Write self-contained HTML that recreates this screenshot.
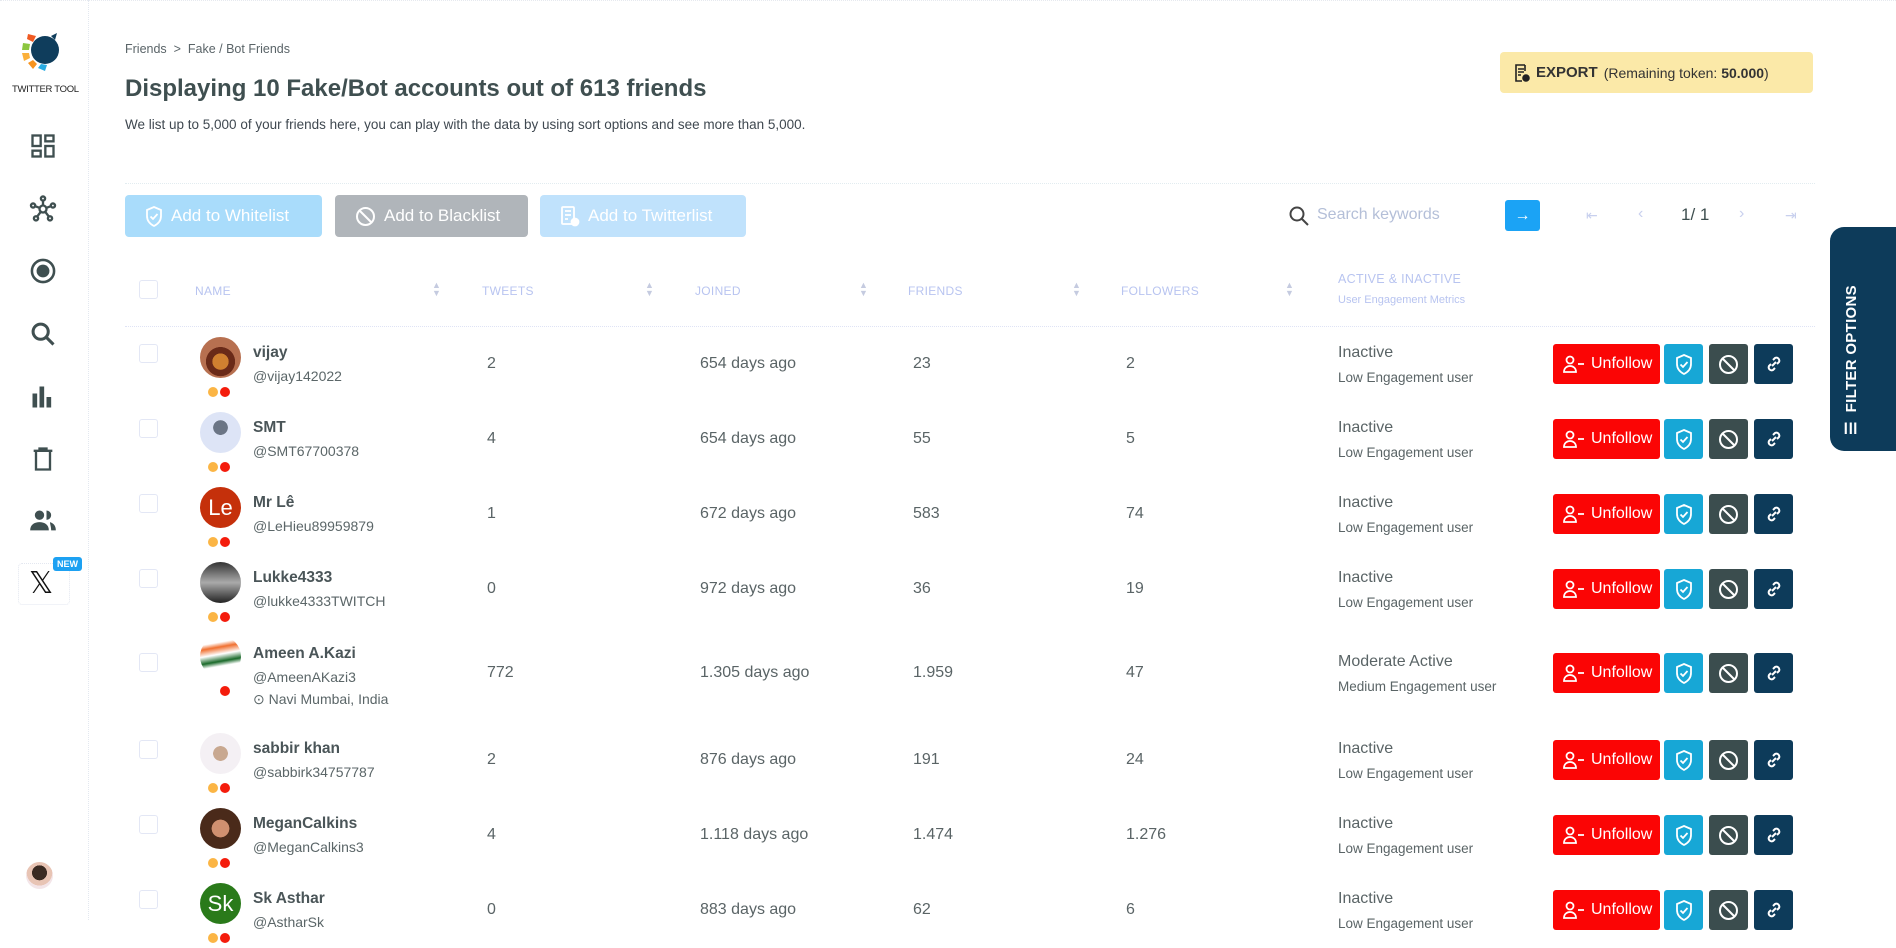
<!DOCTYPE html>
<html><head><meta charset="utf-8"><style>
*{box-sizing:border-box;margin:0;padding:0}
body{width:1896px;height:920px;overflow:hidden;background:#fff;font-family:"Liberation Sans",sans-serif;color:#4a5558;position:relative}
.a{position:absolute}
.side{left:0;top:0;width:89px;height:920px;border-right:1px dotted #e3e8f0}
.ic{position:absolute;left:29px;width:28px;height:28px}
.btn{position:absolute;top:195px;height:42px;border-radius:4px;color:#fff;font-size:17px;display:flex;align-items:center;padding-left:20px;gap:8px}
.hd{position:absolute;top:284px;font-size:12px;color:#b8c4f0;letter-spacing:.3px}
.srt{position:absolute;top:281px;font-size:9px;line-height:8px;color:#c5cbe0}
.cb{position:absolute;left:139px;width:19px;height:19px;border:1px solid #e3e7f5;border-radius:3px}
.av{position:absolute;left:200px;width:41px;height:41px;border-radius:50%}
.dots{position:absolute;left:208px;width:26px;height:10px}
.dots i{display:inline-block;width:10px;height:10px;border-radius:50%;margin-right:2px}
.nm{position:absolute;left:253px;font-size:15.5px;font-weight:bold;color:#4a5558}
.hn{position:absolute;left:253px;font-size:14px;color:#5b6668}
.c{position:absolute;font-size:16px;color:#5a6466}
.st{position:absolute;left:1338px;font-size:16px;color:#5a6466}
.sb{position:absolute;left:1338px;font-size:13.5px;color:#5a6466}
.ub{position:absolute;left:1553px;width:107px;height:40px;background:#fb0505;border-radius:3px;color:#fff;font-size:16px;display:flex;align-items:center;padding-left:10px;gap:6px}
.sq{position:absolute;width:39px;height:40px;border-radius:3px;display:flex;align-items:center;justify-content:center}
</style></head><body>
<div class="a" style="left:0;top:0;width:1896px;height:2px;border-top:1px dotted #e6e9ef"></div>
<div class="a side"></div>
<svg class="a" style="left:18px;top:26px" width="48" height="48" viewBox="0 0 48 48">
<circle cx="27" cy="24" r="14" fill="#0f3d5c"/><path d="M33 10 l6 -3 l-2 7z" fill="#0f3d5c"/>
<path d="M10 8 l8 2 l-3 6 l-6 -3z" fill="#f05a22"/><path d="M5 17 l7 1 l-1 6 l-7 0z" fill="#8cc63f"/>
<path d="M4 27 l7 0 l1 5 l-6 3z" fill="#fbb03b"/><path d="M10 37 l5 -3 l4 4 l-4 5z" fill="#f7931e"/><path d="M20 42 l3 -4 l6 1 l-2 6z" fill="#29abe2"/></svg>
<div class="a" style="left:12px;top:84px;font-size:9.5px;color:#222;letter-spacing:-.3px">TWITTER TOOL</div>
<svg class="ic" style="top:132px" viewBox="0 0 24 24" fill="none" stroke="#3f4f50" stroke-width="2"><rect x="3" y="3" width="7" height="9"/><rect x="14" y="3" width="7" height="5"/><rect x="14" y="12" width="7" height="9"/><rect x="3" y="16" width="7" height="5"/></svg>
<svg class="ic" style="top:195px" viewBox="0 0 24 24" fill="none" stroke="#3f4f50" stroke-width="2"><circle cx="12" cy="12" r="3"/><circle cx="12" cy="3" r="1.8"/><circle cx="3.5" cy="9" r="1.8"/><circle cx="20.5" cy="9" r="1.8"/><circle cx="6" cy="20" r="1.8"/><circle cx="18" cy="20" r="1.8"/><path d="M12 5v4M5 9.5l4 1.5M19 9.5l-4 1.5M7 18.5l3-4M17 18.5l-3-4"/></svg>
<svg class="ic" style="top:257px" viewBox="0 0 24 24"><circle cx="12" cy="12" r="9.5" fill="none" stroke="#3f4f50" stroke-width="2.2"/><circle cx="12" cy="12" r="5.5" fill="#3f4f50"/></svg>
<svg class="ic" style="top:320px" viewBox="0 0 24 24" fill="none" stroke="#3f4f50" stroke-width="2.6"><circle cx="10" cy="10" r="6.5"/><path d="M15 15l6 6"/></svg>
<svg class="ic" style="top:383px" viewBox="0 0 24 24" fill="#3f4f50"><rect x="3" y="9" width="4" height="12"/><rect x="9" y="3" width="4" height="18"/><rect x="15" y="12" width="4" height="9"/></svg>
<svg class="ic" style="top:445px" viewBox="0 0 24 24" fill="none" stroke="#3f4f50" stroke-width="2"><path d="M4 5h16M9 5V3h6v2M6 6v15h12V6"/></svg>
<svg class="ic" style="top:507px" viewBox="0 0 24 24" fill="#3f4f50"><circle cx="9" cy="7" r="4"/><path d="M1 20c0-5 4-7 8-7s8 2 8 7z"/><path d="M15 3a4 4 0 010 8zM18 13c3 1 5 3 5 7h-4c0-3-1-5-1-7z"/></svg>
<div class="a" style="left:18px;top:563px;width:52px;height:42px;border:1px dotted #e3e7f0;border-radius:4px"></div>
<div class="a" style="left:29px;top:566px;font-size:30px;color:#111;font-family:'DejaVu Sans',sans-serif">𝕏</div>
<div class="a" style="left:53px;top:557px;width:29px;height:14px;background:#1da1f2;color:#fff;font-size:9px;font-weight:bold;border-radius:3px;text-align:center;line-height:14px">NEW</div>
<div class="a" style="left:26px;top:862px;width:27px;height:27px;border-radius:50%;background:radial-gradient(circle at 50% 40%,#3a2a22 0 35%,#e8c4b4 36% 60%,#f3e5e8 61%)"></div>

<div class="a" style="left:125px;top:42px;font-size:12.5px;color:#5a6468">Friends &nbsp;&gt;&nbsp; Fake / Bot Friends</div>
<div class="a" style="left:125px;top:75px;font-size:24px;font-weight:bold;color:#3f4f50">Displaying 10 Fake/Bot accounts out of 613 friends</div>
<div class="a" style="left:125px;top:117px;font-size:13.5px;color:#3f4850">We list up to 5,000 of your friends here, you can play with the data by using sort options and see more than 5,000.</div>
<div class="a" style="left:125px;top:183px;width:1690px;border-top:1px dotted #e2ecf0"></div>

<div class="a" style="left:1500px;top:52px;width:313px;height:41px;background:#fbe9a8;border-radius:4px;font-size:14px;color:#333;display:flex;align-items:center;padding-left:14px;gap:6px">
<svg width="16" height="18" viewBox="0 0 16 18" fill="none" stroke="#222" stroke-width="1.6"><path d="M11 1H2v16h6M4 5h6M4 8h6M4 11h3M11 1v6"/><circle cx="12" cy="14" r="3" fill="#222"/></svg>
<b style="font-size:15px">EXPORT</b><span>(Remaining token: <b>50.000</b>)</span></div>

<div class="btn" style="left:125px;width:197px;background:#a9dcfb">
<svg width="18" height="21" viewBox="0 0 18 21" fill="none" stroke="#fff" stroke-width="1.8"><path d="M9 1l7 3v6c0 5-3 8-7 10C5 18 2 15 2 10V4z"/><path d="M5.5 10.5l2.5 2.5 4.5-5"/></svg>Add to Whitelist</div>
<div class="btn" style="left:335px;width:193px;background:#b0b5ba">
<svg width="21" height="21" viewBox="0 0 21 21" fill="none" stroke="#fff" stroke-width="2"><circle cx="10.5" cy="10.5" r="8.5"/><path d="M4.5 4.5l12 12"/></svg>Add to Blacklist</div>
<div class="btn" style="left:540px;width:206px;background:#c0e2fc">
<svg width="20" height="21" viewBox="0 0 20 21" fill="none" stroke="#fff" stroke-width="1.8"><rect x="2" y="1" width="12" height="17" rx="1"/><path d="M5 5h6M5 9h6M5 13h3"/><circle cx="15" cy="16" r="3.5" fill="#fff"/></svg>Add to Twitterlist</div>

<svg class="a" style="left:1288px;top:205px" width="22" height="22" viewBox="0 0 22 22" fill="none" stroke="#444" stroke-width="2"><circle cx="9" cy="9" r="6.5"/><path d="M14 14l6 6"/></svg>
<div class="a" style="left:1317px;top:206px;font-size:16px;color:#b4bfd8">Search keywords</div>
<div class="a" style="left:1505px;top:200px;width:35px;height:31px;background:#1ba3f5;border-radius:3px;color:#fff;font-size:16px;text-align:center;line-height:31px;font-weight:bold">→</div>
<div class="a" style="left:1586px;top:207px;font-size:14px;color:#c8d0ee">⇤</div>
<div class="a" style="left:1638px;top:205px;font-size:16px;color:#c8d0ee">‹</div>
<div class="a" style="left:1681px;top:205px;font-size:17px;color:#3f4f50">1/ 1</div>
<div class="a" style="left:1739px;top:205px;font-size:16px;color:#c8d0ee">›</div>
<div class="a" style="left:1785px;top:207px;font-size:14px;color:#c8d0ee">⇥</div>

<div class="a" style="left:1830px;top:227px;width:80px;height:224px;background:#0d3b5a;border-radius:14px 0 0 14px"></div>
<div class="a" style="left:1842px;top:435px;transform:rotate(-90deg);transform-origin:0 0;color:#fff;font-size:15px;font-weight:bold;white-space:nowrap;letter-spacing:.3px">☰&nbsp; FILTER OPTIONS</div>

<div class="cb" style="top:280px"></div>
<div class="hd" style="left:195px">NAME</div><div class="srt" style="left:432px">▲<br>▼</div>
<div class="hd" style="left:482px">TWEETS</div><div class="srt" style="left:645px">▲<br>▼</div>
<div class="hd" style="left:695px">JOINED</div><div class="srt" style="left:859px">▲<br>▼</div>
<div class="hd" style="left:908px">FRIENDS</div><div class="srt" style="left:1072px">▲<br>▼</div>
<div class="hd" style="left:1121px">FOLLOWERS</div><div class="srt" style="left:1285px">▲<br>▼</div>
<div class="hd" style="left:1338px;top:272px;font-size:12.5px">ACTIVE &amp; INACTIVE</div>
<div class="hd" style="left:1338px;top:294px;font-size:11px;letter-spacing:0">User Engagement Metrics</div>
<div class="a" style="left:125px;top:326px;width:1690px;border-top:1px dotted #dfe3f5"></div>

<div id="rows"></div>
<script>
var R=[["vijay","@vijay142022","2","654 days ago","23","2","Inactive","Low Engagement user",364,"radial-gradient(circle at 50% 60%,#d08030 0 25%,#6a2a18 26% 45%,#b77050 46%)"],
["SMT","@SMT67700378","4","654 days ago","55","5","Inactive","Low Engagement user",439,"radial-gradient(circle at 50% 38%,#6b7585 0 22%,#dde4f6 23%)"],
["Mr Lê","@LeHieu89959879","1","672 days ago","583","74","Inactive","Low Engagement user",514,"#c5300b|Le"],
["Lukke4333","@lukke4333TWITCH","0","972 days ago","36","19","Inactive","Low Engagement user",589,"linear-gradient(#333,#aaa 50%,#222)"],
["Ameen A.Kazi","@AmeenAKazi3","772","1.305 days ago","1.959","47","Moderate Active","Medium Engagement user",673,"linear-gradient(170deg,#fff 20%,#f07030 30%,#fff 45%,#1a6a2a 60%,#fff 70%)"],
["sabbir khan","@sabbirk34757787","2","876 days ago","191","24","Inactive","Low Engagement user",760,"radial-gradient(circle at 50% 50%,#c8a890 0 25%,#f4f0f4 26%)"],
["MeganCalkins","@MeganCalkins3","4","1.118 days ago","1.474","1.276","Inactive","Low Engagement user",835,"radial-gradient(circle at 50% 50%,#d09070 0 30%,#4a2a1a 31%)"],
["Sk Asthar","@AstharSk","0","883 days ago","62","6","Inactive","Low Engagement user",910,"#2a7a1a|Sk"]];
var h="";
R.forEach(function(r){var y=r[8],bg=r[9],t="";if(bg.indexOf("|")>0){t=bg.split("|")[1];bg=bg.split("|")[0];}
var am=r[0]=="Ameen A.Kazi";var ay=am?y-37:y-27;
h+='<div class="cb" style="top:'+(y-20)+'px"></div>';
h+='<div class="av" style="top:'+ay+'px;background:'+bg+';color:#fff;font-size:22px;text-align:center;line-height:41px">'+t+'</div>';
h+='<div class="dots" style="top:'+(am?y+10:y+20)+'px">'+(am?'<i style="background:transparent"></i><i style="background:#f41c0c"></i>':'<i style="background:#fbb545"></i><i style="background:#f41c0c"></i>')+'</div>';
h+='<div class="nm" style="top:'+(am?y-28:y-20)+'px">'+r[0]+'</div>';
h+='<div class="hn" style="top:'+(am?y-4:y+4)+'px">'+r[1]+'</div>';
if(am)h+='<div class="hn" style="top:'+(y+18)+'px">⊙ Navi Mumbai, India</div>';
h+='<div class="c" style="left:487px;top:'+(y-9)+'px">'+r[2]+'</div><div class="c" style="left:700px;top:'+(y-9)+'px">'+r[3]+'</div><div class="c" style="left:913px;top:'+(y-9)+'px">'+r[4]+'</div><div class="c" style="left:1126px;top:'+(y-9)+'px">'+r[5]+'</div>';
h+='<div class="st" style="top:'+(y-20)+'px">'+r[6]+'</div><div class="sb" style="top:'+(y+6)+'px">'+r[7]+'</div>';
var by=y-20;
h+='<div class="ub" style="top:'+by+'px"><svg width="22" height="18" viewBox="0 0 22 18" fill="none" stroke="#fff" stroke-width="1.8"><circle cx="7" cy="5" r="3.5"/><path d="M1 17c0-4 3-6 6-6s6 2 6 6zM15 9h6"/></svg>Unfollow</div>';
h+='<div class="sq" style="left:1664px;top:'+by+'px;background:#17a7d6"><svg width="18" height="21" viewBox="0 0 18 21" fill="none" stroke="#fff" stroke-width="1.8"><path d="M9 1l7 3v6c0 5-3 8-7 10C5 18 2 15 2 10V4z"/><path d="M5.5 10.5l2.5 2.5 4.5-5"/></svg></div>';
h+='<div class="sq" style="left:1709px;top:'+by+'px;background:#3b4d4e"><svg width="21" height="21" viewBox="0 0 21 21" fill="none" stroke="#fff" stroke-width="2"><circle cx="10.5" cy="10.5" r="8.5"/><path d="M4.5 4.5l12 12"/></svg></div>';
h+='<div class="sq" style="left:1754px;top:'+by+'px;background:#0d3b5a"><svg width="18" height="18" viewBox="0 0 18 18" fill="none" stroke="#fff" stroke-width="2"><path d="M8 5l2-2a3 3 0 014 4l-2 2M10 13l-2 2a3 3 0 01-4-4l2-2M7 11l4-4"/></svg></div>';
});
document.getElementById("rows").innerHTML=h;
</script>
</body></html>
